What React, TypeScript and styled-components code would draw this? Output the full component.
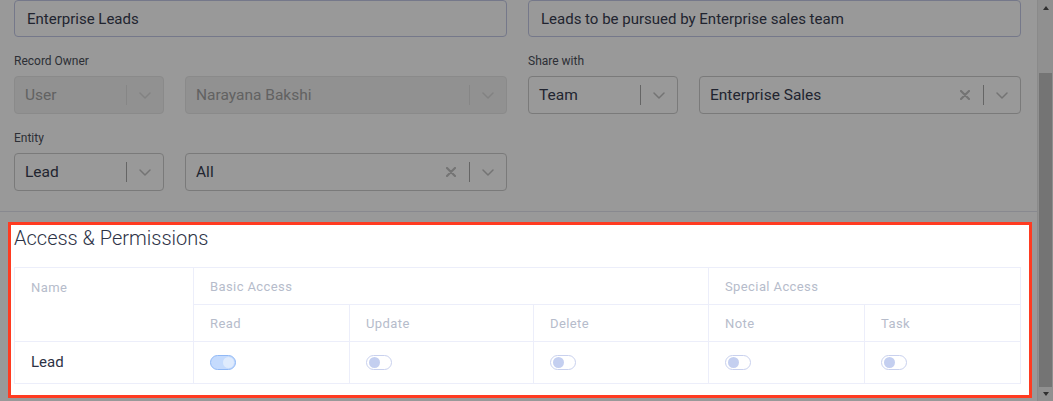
import styled, { createGlobalStyle } from "styled-components";

const GlobalStyle = createGlobalStyle`
  html, body {
    margin: 0;
    padding: 0;
    background: #fff;
  }
  body {
    font-family: Roboto, "Liberation Sans", sans-serif;
  }
  * {
    box-sizing: border-box;
  }
`;

const PageStyled = styled.div`
  position: relative;
  display: flex;
  width: 1053px;
  height: 401px;
  overflow: hidden;
  background: #fff;
`;

const ContentStyled = styled.div`
  flex: 1;
  min-width: 0;
`;

const OverlayStyled = styled.div`
  position: absolute;
  inset: 0;
  background: rgba(0, 0, 0, 0.4);
  z-index: 1;
`;

/* ---------- form ---------- */

const FormStyled = styled.div`
  display: flex;
  flex-direction: column;
  gap: 17px;
  padding: 0 16px 20px 14px;
`;

const TwoColStyled = styled.div`
  display: grid;
  grid-template-columns: 1fr 1fr;
  gap: 21px;
`;

const TextInputStyled = styled.div`
  height: 37px;
  border: 1px solid #c3c9e6;
  border-radius: 4px;
  padding: 0 12px;
  display: flex;
  align-items: center;
  font-size: 15px;
  color: #383d50;
`;

const FieldStyled = styled.div`
  display: flex;
  flex-direction: column;
`;

const LabelStyled = styled.div`
  font-size: 12px;
  line-height: 15px;
  color: #4b4f5a;
  margin-bottom: 7px;
`;

const SelectRowStyled = styled.div`
  display: grid;
  grid-template-columns: 150px 1fr;
  gap: 21px;
`;

const SelectStyled = styled.div<{ $disabled?: boolean }>`
  height: 38px;
  display: flex;
  align-items: center;
  border: 1px solid ${(p) => (p.$disabled ? "#e6e6e6" : "#cccccc")};
  background: ${(p) => (p.$disabled ? "#f2f2f2" : "#ffffff")};
  border-radius: 4px;
`;

const SelectValueStyled = styled.div<{ $disabled?: boolean }>`
  flex: 1;
  padding-left: 10px;
  font-size: 15.5px;
  color: ${(p) => (p.$disabled ? "#a3a3a3" : "#383d50")};
  white-space: nowrap;
`;

const IndicatorStyled = styled.div<{ $disabled?: boolean }>`
  width: 36px;
  height: 100%;
  display: flex;
  align-items: center;
  justify-content: center;
  color: ${(p) => (p.$disabled ? "#d9d9d9" : "#c2c2c2")};
`;

const SeparatorStyled = styled.span<{ $disabled?: boolean }>`
  width: 1px;
  align-self: stretch;
  margin: 8px 0;
  background: ${(p) => (p.$disabled ? "#e0e0e0" : "#a9a9a9")};
`;

const Chevron = () => (
  <svg width="12" height="7" viewBox="0 0 12 7">
    <polyline
      points="1,1 6,6 11,1"
      fill="none"
      stroke="currentColor"
      strokeWidth="1.5"
      strokeLinecap="round"
      strokeLinejoin="round"
    />
  </svg>
);

const Cross = () => (
  <svg width="10" height="10" viewBox="0 0 10 10">
    <path d="M1 1 L9 9 M9 1 L1 9" stroke="currentColor" strokeWidth="2.2" strokeLinecap="round" />
  </svg>
);

type SelectProps = { value: string; disabled?: boolean; clearable?: boolean };

const Select = ({ value, disabled, clearable }: SelectProps) => (
  <SelectStyled $disabled={disabled}>
    <SelectValueStyled $disabled={disabled}>{value}</SelectValueStyled>
    {clearable && (
      <IndicatorStyled $disabled={disabled}>
        <Cross />
      </IndicatorStyled>
    )}
    <SeparatorStyled $disabled={disabled} />
    <IndicatorStyled $disabled={disabled}>
      <Chevron />
    </IndicatorStyled>
  </SelectStyled>
);

const Form = () => (
  <FormStyled>
    <TwoColStyled>
      <TextInputStyled>Enterprise Leads</TextInputStyled>
      <TextInputStyled>Leads to be pursued by Enterprise sales team</TextInputStyled>
    </TwoColStyled>
    <TwoColStyled>
      <FieldStyled>
        <LabelStyled>Record Owner</LabelStyled>
        <SelectRowStyled>
          <Select value="User" disabled />
          <Select value="Narayana Bakshi" disabled />
        </SelectRowStyled>
      </FieldStyled>
      <FieldStyled>
        <LabelStyled>Share with</LabelStyled>
        <SelectRowStyled>
          <Select value="Team" />
          <Select value="Enterprise Sales" clearable />
        </SelectRowStyled>
      </FieldStyled>
    </TwoColStyled>
    <TwoColStyled>
      <FieldStyled>
        <LabelStyled>Entity</LabelStyled>
        <SelectRowStyled>
          <Select value="Lead" />
          <Select value="All" clearable />
        </SelectRowStyled>
      </FieldStyled>
    </TwoColStyled>
  </FormStyled>
);

const DividerStyled = styled.div`
  border-top: 1px solid #e3e5ee;
`;

/* ---------- permissions ---------- */

const SpotlightStyled = styled.section`
  position: relative;
  z-index: 2;
  margin: 10px 5px 0 8px;
  border: 3px solid #ff3b21;
  background: #fff;
  padding: 3px 8px 11px 3px;
`;

const TitleStyled = styled.h2`
  margin: 0 0 19px;
  font-size: 20px;
  line-height: 20px;
  font-weight: 300;
  color: #2d3346;
`;

const TableStyled = styled.div`
  display: grid;
  grid-template-columns: 178px 155px 183px 174px 155px 1fr;
  grid-template-rows: 36px 36px 41px;
  gap: 1px;
  border: 1px solid #eceefa;
  background: #eceefa;
`;

const CellStyled = styled.div<{ $span?: number; $rows?: number; $head?: boolean; $top?: boolean }>`
  grid-column: span ${(p) => p.$span ?? 1};
  grid-row: span ${(p) => p.$rows ?? 1};
  background: #fff;
  display: flex;
  align-items: ${(p) => (p.$top ? "flex-start" : "center")};
  padding: ${(p) => (p.$top ? "12px" : "0")} 0 0 16px;
  font-size: ${(p) => (p.$head ? "13px" : "15px")};
  line-height: 15px;
  letter-spacing: ${(p) => (p.$head ? "0.4px" : "0")};
  color: ${(p) => (p.$head ? "#b6bccb" : "#2c3245")};
`;

const ToggleStyled = styled.span<{ $on?: boolean }>`
  position: relative;
  display: inline-block;
  width: 26px;
  height: 15px;
  border-radius: 8px;
  border: 1px solid ${(p) => (p.$on ? "#91b9f6" : "#c9d1ee")};
  background: ${(p) => (p.$on ? "#c5dbfd" : "#ffffff")};

  &::after {
    content: "";
    position: absolute;
    top: 1px;
    left: ${(p) => (p.$on ? "12px" : "2px")};
    width: 11px;
    height: 11px;
    border-radius: 50%;
    background: ${(p) => (p.$on ? "#dfebfd" : "#c4cff0")};
  }
`;

const permissions = [
  { key: "read", on: true },
  { key: "update", on: false },
  { key: "delete", on: false },
  { key: "note", on: false },
  { key: "task", on: false },
];

const Permissions = () => (
  <SpotlightStyled>
    <TitleStyled>Access &amp; Permissions</TitleStyled>
    <TableStyled>
      <CellStyled $head $top $rows={2}>
        Name
      </CellStyled>
      <CellStyled $head $span={3}>
        Basic Access
      </CellStyled>
      <CellStyled $head $span={2}>
        Special Access
      </CellStyled>
      <CellStyled $head>Read</CellStyled>
      <CellStyled $head>Update</CellStyled>
      <CellStyled $head>Delete</CellStyled>
      <CellStyled $head>Note</CellStyled>
      <CellStyled $head>Task</CellStyled>
      <CellStyled>Lead</CellStyled>
      {permissions.map((perm) => (
        <CellStyled key={perm.key}>
          <ToggleStyled $on={perm.on} />
        </CellStyled>
      ))}
    </TableStyled>
  </SpotlightStyled>
);

/* ---------- scrollbar ---------- */

const ScrollTrackStyled = styled.div`
  width: 16px;
  background: #f1f1f1;
  border-left: 1px solid #e6e6e6;
  display: flex;
  flex-direction: column;
`;

const ScrollArrowStyled = styled.div<{ $down?: boolean }>`
  height: ${(p) => (p.$down ? "14px" : "16px")};
  display: flex;
  align-items: center;
  justify-content: center;

  &::after {
    content: "";
    border-left: 3.5px solid transparent;
    border-right: 3.5px solid transparent;
    ${(p) => (p.$down ? "border-top: 4px solid #505050;" : "border-bottom: 4px solid #505050;")}
  }
`;

const ScrollThumbStyled = styled.div`
  height: 314px;
  margin: 57px 1px 0 1px;
  background: #c1c1c1;
`;

const Scrollbar = () => (
  <ScrollTrackStyled>
    <ScrollArrowStyled />
    <ScrollThumbStyled />
    <ScrollArrowStyled $down />
  </ScrollTrackStyled>
);

const App = () => {
  return (
    <>
      <GlobalStyle />
      <PageStyled>
        <ContentStyled>
          <Form />
          <DividerStyled />
          <Permissions />
        </ContentStyled>
        <Scrollbar />
        <OverlayStyled />
      </PageStyled>
    </>
  );
};

export default App;
